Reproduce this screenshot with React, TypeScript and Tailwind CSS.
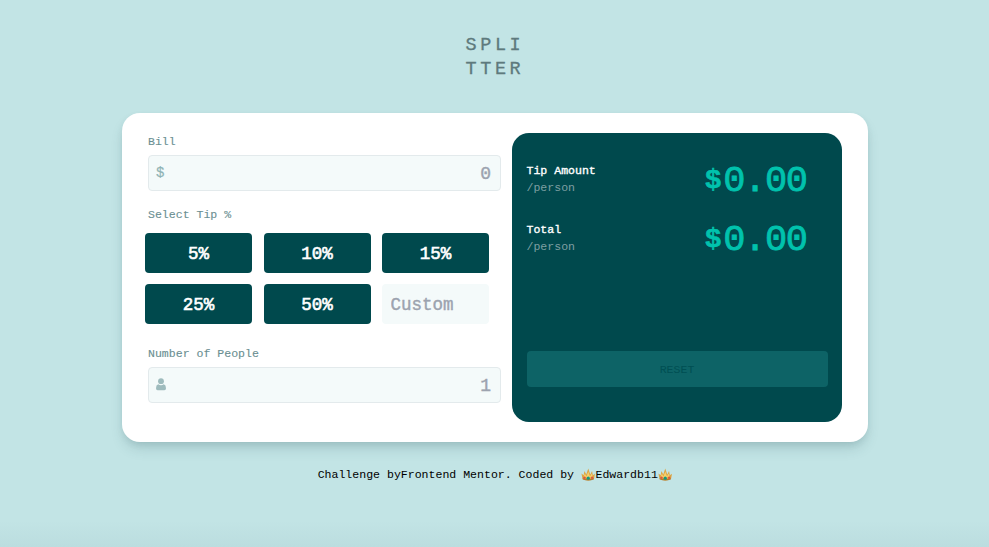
import { useState } from "react";

const label = "text-[11.55px] leading-[17px] text-[#6b8f92] [-webkit-text-stroke:0.12px_#6b8f92]";
const field =
  "flex h-[36px] w-[353px] items-center rounded-[4px] border border-[#e3eaec] bg-[#f4fafa] pl-[7px] pr-[9px]";
const input =
  "min-w-0 flex-1 bg-transparent pt-[3px] text-right text-[18px] text-[#9ca3af] placeholder:text-[#9ca3af] outline-none [-webkit-text-stroke:0.4px_#9ca3af]";

function Crown() {
  return (
    <svg width="14.5" height="13" viewBox="0 0 14 13" className="shrink-0">
      <path d="M1.2 10.8 0.2 5.6 2.4 7.2 3.2 3 5 6.4 7 0.4 9 6.4 10.8 3 11.6 7.2 13.8 5.6 12.8 10.8Q7 14 1.2 10.8Z" fill="#dca443" />
      <path d="M2.4 8.8 3.6 5.4 5.2 8.4 7 3.4 8.8 8.4 10.4 5.4 11.6 8.8 7 10Z" fill="#f6d06c" />
      <path d="M1.4 10.2Q7 12 12.6 10.2L12.6 11.4Q7 13.6 1.4 11.4Z" fill="#b07c30" />
      <circle cx="3.2" cy="9.8" r="1.2" fill="#d95740" />
      <circle cx="7" cy="10.2" r="1.6" fill="#149980" />
      <circle cx="10.9" cy="9.8" r="1.2" fill="#d95740" />
    </svg>
  );
}

function Person() {
  return (
    <svg width="10" height="13" viewBox="0 0 10 13" fill="#9ebbbd" className="mb-[1px] shrink-0">
      <circle cx="5" cy="3.2" r="2.9" />
      <path d="M2.2 6.3Q5 8.2 7.8 6.3 10 7 10 10.3 10 12.3 8.4 12.3H1.6Q0 12.3 0 10.3 0 7 2.2 6.3Z" />
    </svg>
  );
}

function Result({ title, value }: { title: string; value: string }) {
  return (
    <div className="flex h-[59px] items-start justify-between pr-[21px]">
      <div className="pt-[1px] text-[11.55px] leading-[17px]">
        <p className="text-white [-webkit-text-stroke:0.35px_#ffffff]">{title}</p>
        <p className="text-[#7d9fa2]">/person</p>
      </div>
      <div className="flex h-[38px] items-center pt-[2px] text-[#00c2ad]">
        <span className="w-[18.5px] text-[28px] leading-[38px] font-bold [-webkit-text-stroke:0.5px_#00c2ad]">$</span>
        <span className="text-[37px] leading-[38px] tracking-[-1.4px] [-webkit-text-stroke:0.8px_#00c2ad]">{value}</span>
      </div>
    </div>
  );
}

export default function App() {
  const [bill, setBill] = useState("");
  const [people, setPeople] = useState("");
  return (
    <div className="flex h-[547px] flex-col items-center overflow-hidden bg-[#c2e4e5] font-['Liberation_Mono',monospace]">
      <h1 className="mt-[34px] h-[47px] w-[60px] pl-[1px] text-[18.5px] leading-[23.5px] tracking-[3.6px] text-[#5e7a7d] [-webkit-text-stroke:0.3px_#5e7a7d]">
        SPLI
        <br />
        TTER
      </h1>
      <main className="mt-[31.5px] ml-[1px] flex h-[329.5px] w-[746px] shrink-0 rounded-[18px] bg-white pt-[20px] pl-[26px] shadow-[0_8px_14px_-3px_rgba(40,80,90,0.22),0_3px_8px_-3px_rgba(40,80,90,0.15)]">
        <section className="w-[364px] shrink-0">
          <p className={label}>Bill</p>
          <div className={field + " mt-[5px]"}>
            <span className="pt-[2px] text-[14px] text-[#8eb3b4] [-webkit-text-stroke:0.2px_#8eb3b4]">$</span>
            <input className={input} placeholder="0" value={bill} onChange={(e) => setBill(e.target.value)} />
          </div>
          <p className={label + " mt-[15px]"}>Select Tip %</p>
          <div className="mt-[10.5px] -ml-[3px] grid w-[344px] grid-cols-3 gap-[11.5px]">
            {["5%", "10%", "15%", "25%", "50%"].map((tip) => (
              <button
                key={tip}
                className="h-[39.5px] rounded-[4px] bg-[#00494d] pt-[3px] text-[17.5px] text-white [-webkit-text-stroke:0.6px_#ffffff]"
              >
                {tip}
              </button>
            ))}
            <input
              placeholder="Custom"
              className="h-[39.5px] w-full min-w-0 rounded-[4px] bg-[#f4fafa] px-[8.5px] pt-[3px] text-[17.5px] outline-none placeholder:text-[#9ca3af] [-webkit-text-stroke:0.4px_#9ca3af]"
            />
          </div>
          <p className={label + " mt-[21px]"}>Number of People</p>
          <div className={field + " mt-[5px]"}>
            <Person />
            <input className={input} placeholder="1" value={people} onChange={(e) => setPeople(e.target.value)} />
          </div>
        </section>
        <section className="flex h-[289.5px] w-[330px] flex-col rounded-[17px] bg-[#00494d] px-[14.5px] pt-[28px]">
          <Result title="Tip Amount" value="0.00" />
          <Result title="Total" value="0.00" />
          <button className="mt-[72.5px] h-[35.5px] w-full rounded-[4px] bg-[#0d6366] pt-[1px] text-[11.55px] text-[#004f53]">
            RESET
          </button>
        </section>
      </main>
      <footer className="mt-[24px] ml-[1px] flex h-[17px] items-center text-[11.55px] leading-[17px] whitespace-pre text-black">
        <span>Challenge byFrontend Mentor. Coded by </span>
        <Crown />
        <span>Edwardb11</span>
        <Crown />
      </footer>
      <div className="mt-auto h-[26px] w-full shrink-0 bg-linear-to-b from-transparent to-[#bbdddf]" />
    </div>
  );
}
